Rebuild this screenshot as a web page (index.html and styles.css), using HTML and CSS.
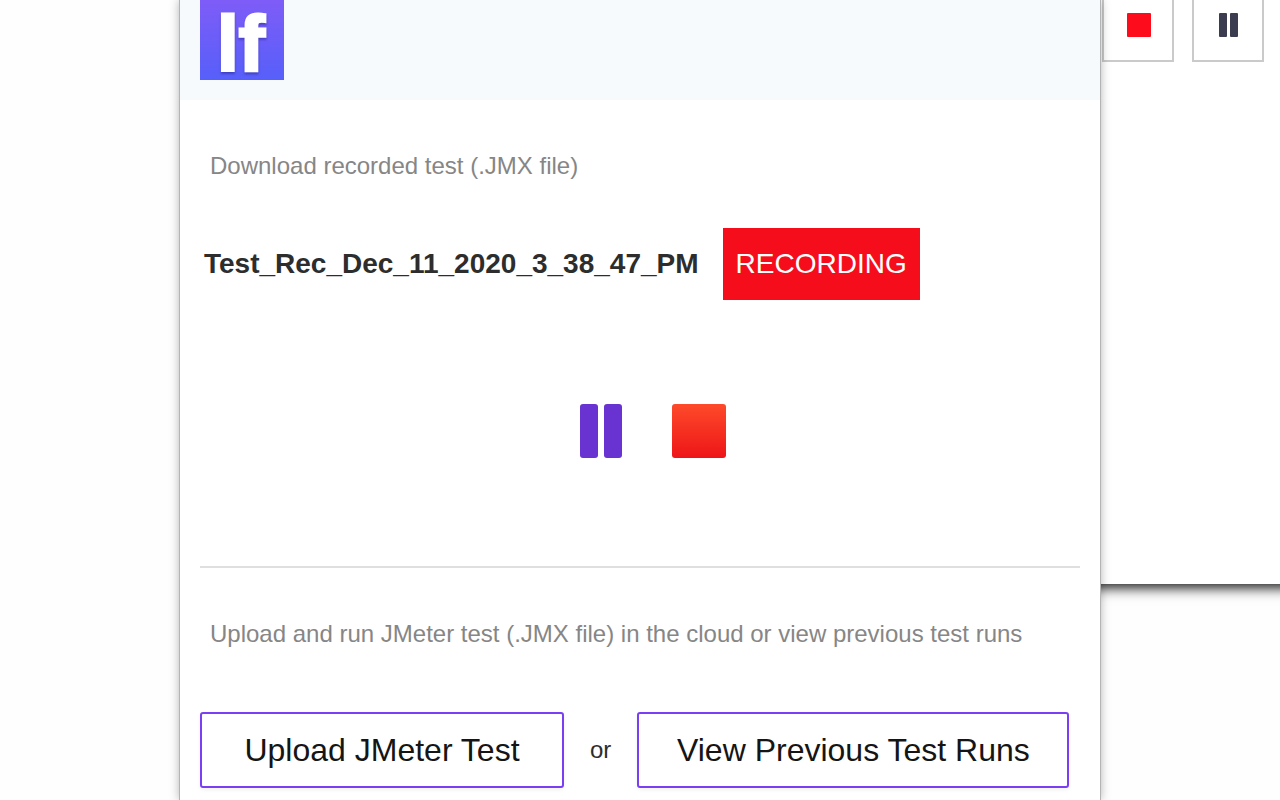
FILE: index.html
```
<!DOCTYPE html>
<html lang="en">
<head>
  <meta charset="UTF-8" />
  <meta name="viewport" content="width=device-width, initial-scale=1.0"/>
  <title>Recorder</title>
  <link rel="stylesheet" href="styles.css">
</head>
<body>
  <div class="layout">
    <main class="popup">
      <header class="header">
        <svg class="logo" viewBox="0 0 84 80" role="img" aria-label="lf">
          <defs>
            <linearGradient id="logoBg" x1="0" y1="0" x2="0" y2="1">
              <stop offset="0" stop-color="#7f5cf7"/>
              <stop offset="1" stop-color="#575ffa"/>
            </linearGradient>
          </defs>
          <rect width="84" height="80" fill="url(#logoBg)"/>
          <text class="logo-text" x="17" y="71">lf</text>
        </svg>
      </header>

      <section class="section">
        <p class="hint">Download recorded test (.JMX file)</p>
        <div class="test">
          <span class="test-name">Test_Rec_Dec_11_2020_3_38_47_PM</span>
          <span class="status">RECORDING</span>
        </div>
        <div class="controls">
          <button class="icon-btn" type="button" aria-label="Pause">
            <svg width="42" height="54" viewBox="0 0 42 54">
              <rect width="18" height="54" rx="3" fill="#6833d0"/>
              <rect x="24" width="18" height="54" rx="3" fill="#6833d0"/>
            </svg>
          </button>
          <button class="icon-btn" type="button" aria-label="Stop">
            <svg width="54" height="54" viewBox="0 0 54 54">
              <defs>
                <linearGradient id="stopBg" x1="0" y1="0" x2="0" y2="1">
                  <stop offset="0" stop-color="#fd4a2a"/>
                  <stop offset="1" stop-color="#ee1518"/>
                </linearGradient>
              </defs>
              <rect width="54" height="54" rx="3" fill="url(#stopBg)"/>
            </svg>
          </button>
        </div>
      </section>

      <section class="section upload">
        <p class="hint">Upload and run JMeter test (.JMX file) in the cloud or view previous test runs</p>
        <div class="actions">
          <button class="action-btn upload-btn" type="button">Upload JMeter Test</button>
          <span class="or">or</span>
          <button class="action-btn runs-btn" type="button">View Previous Test Runs</button>
        </div>
      </section>
    </main>

    <aside class="toolbar">
      <button class="tool-btn" type="button" aria-label="Stop recording">
        <svg width="26" height="26" viewBox="0 0 26 26">
          <rect x="2" y="1" width="24" height="24" rx="1" fill="#fd0d1b"/>
        </svg>
      </button>
      <button class="tool-btn" type="button" aria-label="Pause recording">
        <svg width="26" height="26" viewBox="0 0 26 26">
          <rect x="4" y="1" width="8" height="24" rx="1" fill="#3c3c50"/>
          <rect x="15" y="1" width="8" height="24" rx="1" fill="#3c3c50"/>
        </svg>
      </button>
    </aside>
  </div>
</body>
</html>
```

FILE: styles.css
```
* {
  box-sizing: border-box;
}

body {
  margin: 0;
  background: #fefefe;
  color: #2d2d2d;
  font-family: "Liberation Sans", Arial, Helvetica, sans-serif;
}

button {
  font-family: inherit;
  cursor: pointer;
}

.layout {
  display: grid;
  grid-template-columns: 180px minmax(0, 1fr) 180px;
  min-height: 100vh;
  overflow-x: clip;
}

.popup {
  grid-column: 2;
  position: relative;
  z-index: 1;
  background: #fff;
  box-shadow: 0 0 0 1px #b4b4b4, 0 0 10px rgba(0, 0, 0, 0.35);
}

.header {
  padding: 0 20px 20px;
  background: #f6fafd;
}

.logo {
  display: block;
  width: 84px;
  height: 80px;
  overflow: visible;
}

.logo-text {
  font-size: 78px;
  font-weight: bold;
  fill: #fff;
  stroke: #fff;
  stroke-width: 3px;
  filter: drop-shadow(0 2px 1px rgba(20, 20, 120, 0.4));
}

.section {
  margin: 0 20px;
  padding-top: 50px;
}

.hint {
  margin: 0;
  padding: 0 10px;
  color: #868686;
  font-size: 24px;
  line-height: 32px;
}

.test {
  display: flex;
  align-items: center;
  gap: 24px;
  margin-top: 46px;
  padding-left: 4px;
}

.test-name {
  font-size: 28px;
  font-weight: bold;
}

.status {
  padding: 0 13px;
  background: #f60d1b;
  color: #fff;
  font-size: 28px;
  line-height: 72px;
}

.controls {
  display: flex;
  justify-content: center;
  gap: 50px;
  padding: 104px 0 108px 26px;
}

.icon-btn {
  padding: 0;
  border: none;
  background: none;
}

.icon-btn svg,
.tool-btn svg {
  display: block;
}

.upload {
  border-top: 2px solid #dfdfdf;
}

.actions {
  display: flex;
  align-items: center;
  gap: 26px;
  margin-top: 62px;
  padding-bottom: 12px;
}

.action-btn {
  height: 76px;
  padding: 0;
  border: 2px solid #7a3ff2;
  border-radius: 3px;
  background: #fff;
  color: #151515;
  font-size: 32px;
  white-space: nowrap;
  box-shadow: 0 2px 4px rgba(0, 0, 0, 0.06);
}

.upload-btn {
  width: 364px;
}

.runs-btn {
  width: 432px;
}

.or {
  font-size: 24px;
}

/* runs under the popup on the left and past the window on the right */
.toolbar {
  display: flex;
  align-items: flex-start;
  gap: 18px;
  height: 584px;
  margin: 0 -20px;
  padding: 0 22px;
  background: #fff;
  box-shadow: 0 2px 12px 2px rgba(0, 0, 0, 0.9);
}

.tool-btn {
  width: 72px;
  padding: 12px 21px 22px;
  border: 2px solid #cacaca;
  border-top: none;
  background: #fff;
}
```
